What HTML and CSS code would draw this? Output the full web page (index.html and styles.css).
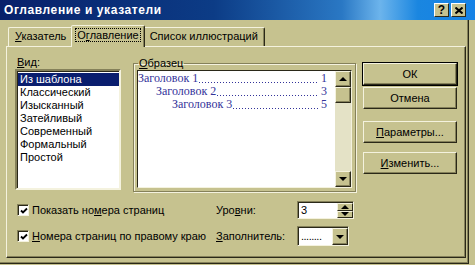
FILE: index.html
```html
<!DOCTYPE html>
<html lang="ru">
<head>
    <meta charset="UTF-8">
    <title>Оглавление и указатели</title>
    <link rel="stylesheet" href="styles.css">
</head>
<body>
    <div class="dialog">
        <div class="titlebar">
            <span class="title">Оглавление и указатели</span>
            <div class="tb-buttons">
                <span class="tb-btn help">?</span>
                <span class="tb-btn">
                    <svg width="8" height="7" viewBox="0 0 8 7"><path d="M0.5 0.5 L7.5 6.5 M7.5 0.5 L0.5 6.5" stroke="#000" stroke-width="2"/></svg>
                </span>
            </div>
        </div>
        <div class="client">
            <div class="tabs">
                <div class="tab"><u>У</u>казатель</div>
                <div class="tab active"><span class="focus">О<u>г</u>лавление</span></div>
                <div class="tab">Список иллюстраций</div>
            </div>
            <div class="panel">
                <div class="top">
                    <div class="kind">
                        <div class="label"><u>В</u>ид:</div>
                        <ul class="list">
                            <li class="sel">Из шаблона</li>
                            <li>Классический</li>
                            <li>Изысканный</li>
                            <li>Затейливый</li>
                            <li>Современный</li>
                            <li>Формальный</li>
                            <li>Простой</li>
                        </ul>
                    </div>
                    <fieldset class="sample">
                        <legend><u>О</u>бразец</legend>
                        <div class="preview">
                            <div class="toc">
                                <div class="toc-row"><span>Заголовок 1</span><span class="dots"></span><span>1</span></div>
                                <div class="toc-row lvl2"><span>Заголовок 2</span><span class="dots"></span><span>3</span></div>
                                <div class="toc-row lvl3"><span>Заголовок 3</span><span class="dots"></span><span>5</span></div>
                            </div>
                            <div class="scroll">
                                <div class="sbtn"><span class="tri up"></span></div>
                                <div class="sbtn thumb"></div>
                                <div class="track"></div>
                                <div class="sbtn"><span class="tri down"></span></div>
                            </div>
                        </div>
                    </fieldset>
                    <div class="buttons">
                        <div class="btn default">ОК</div>
                        <div class="btn">Отмена</div>
                        <div class="btn gap"><span><u>П</u>араметры...</span></div>
                        <div class="btn gap2"><span><u>И</u>зменить...</span></div>
                    </div>
                </div>
                <div class="bottom">
                    <div class="row">
                        <div class="check">
                            <span class="box"><svg width="8" height="8" viewBox="0 0 8 8"><path d="M1 3.5 L3 5.5 L7 1.5" fill="none" stroke="#000" stroke-width="1.8"/></svg></span>
                            <span>Показать но<u>м</u>ера страниц</span>
                        </div>
                        <div class="field-label">Уро<u>в</u>ни:</div>
                        <div class="spin">
                            <span class="spin-val">3</span>
                            <span class="spin-btns">
                                <span class="sb"><span class="tri up"></span></span>
                                <span class="sb"><span class="tri down"></span></span>
                            </span>
                        </div>
                    </div>
                    <div class="row row2">
                        <div class="check">
                            <span class="box"><svg width="8" height="8" viewBox="0 0 8 8"><path d="M1 3.5 L3 5.5 L7 1.5" fill="none" stroke="#000" stroke-width="1.8"/></svg></span>
                            <span><u>Н</u>омера страниц по правому краю</span>
                        </div>
                        <div class="field-label"><u>З</u>аполнитель:</div>
                        <div class="combo">
                            <span class="combo-val">........</span>
                            <span class="combo-btn"><span class="tri down"></span></span>
                        </div>
                    </div>
                </div>
            </div>
        </div>
    </div>
</body>
</html>
```

FILE: styles.css
```css
*{
    margin: 0;
    padding: 0;
    box-sizing: border-box;
    list-style: none;
}
body{
    width: 475px;
    height: 265px;
    overflow: hidden;
    background-color: #c6c28f;
    font-family: "Liberation Sans", Arial, sans-serif;
    font-size: 11px;
    color: #000;
}
u{
    text-decoration: underline;
}
.dialog{
    width: 475px;
    height: 265px;
}
/* title bar */
.titlebar{
    height: 20px;
    display: flex;
    align-items: center;
    justify-content: space-between;
    padding: 0 9px 0 4px;
    background: linear-gradient(to right, #08206a 0%, #0c3c86 45%, #2a78c4 72%, #6cb4ec 80%, #1a86e0 88%, #1582e6 100%);
}
.title{
    color: #fff;
    font-weight: bold;
    font-size: 12px;
    letter-spacing: 0.6px;
}
.tb-buttons{
    display: flex;
    gap: 2px;
}
.tb-btn{
    width: 15px;
    height: 14px;
    display: flex;
    align-items: center;
    justify-content: center;
    background-color: #c6c28f;
    border: 1px solid;
    border-color: #fff #2a2818 #2a2818 #fff;
    font-weight: bold;
    font-size: 12px;
    line-height: 1;
}
/* client area */
.client{
    width: 469px;
    height: 244px;
    border-right: 1px solid #2a2818;
    border-bottom: 1px solid #2a2818;
    box-shadow: inset -1px -1px 0 #85815a;
}
.tabs{
    display: flex;
    align-items: flex-end;
    padding: 4px 0 0 8px;
    height: 26px;
}
.tab{
    height: 19px;
    line-height: 17px;
    padding: 0 6px;
    border: 1px solid;
    border-bottom: none;
    border-color: #f4f2de #2a2818 transparent #f4f2de;
    border-radius: 2px 2px 0 0;
    box-shadow: inset -1px 0 0 #85815a;
}
.tab.active{
    height: 22px;
    line-height: 19px;
    padding: 0 4px;
    margin: 0 -2px -1px -2px;
    position: relative;
    z-index: 1;
    background-color: #c6c28f;
}
.focus{
    outline: 1px dotted #000;
    padding: 0 1px;
}
.panel{
    margin-left: 6px;
    width: 460px;
    height: 212px;
    border: 1px solid;
    border-color: #f4f2de #2a2818 #2a2818 #f4f2de;
    box-shadow: inset -1px -1px 0 #85815a;
}
.top{
    display: flex;
    padding: 9px 0 0 8px;
}
.kind{
    width: 106px;
    flex-shrink: 0;
}
.label{
    height: 13px;
    line-height: 13px;
    padding-left: 2px;
}
.list{
    height: 121px;
    background-color: #fff;
    border: 2px solid;
    border-color: #85815a #f4f2de #f4f2de #85815a;
    box-shadow: inset 1px 1px 0 #2a2818;
    padding: 2px 0 0 1px;
}
.list li{
    height: 13px;
    line-height: 13px;
    padding-left: 2px;
}
.list .sel{
    background-color: #0a1e6e;
    color: #fff;
}
/* sample group */
.sample{
    margin: 1px 0 0 12px;
    width: 223px;
    min-width: 0;
    flex-shrink: 0;
    height: 135px;
    border: 1px solid #85815a;
    box-shadow: 1px 1px 0 #f4f2de, inset 1px 1px 0 #f4f2de;
    padding: 0 3px;
}
.sample legend{
    margin-left: 1px;
    padding: 0 1px;
    line-height: 12px;
}
.preview{
    display: flex;
    margin-top: 1px;
    height: 118px;
    border: 1px solid;
    border-color: #2a2818 #f4f2de #f4f2de #2a2818;
}
.toc{
    flex: 1;
    min-width: 0;
    background-color: #fff;
    font-family: "Liberation Serif", "Times New Roman", serif;
    font-size: 12px;
    color: #33339a;
    padding: 1px 8px 0 0;
}
.toc-row{
    display: flex;
    height: 13px;
    line-height: 13px;
    white-space: nowrap;
}
.toc-row.lvl2{
    padding-left: 18px;
}
.toc-row.lvl3{
    padding-left: 34px;
}
/* dot leader */
.dots{
    flex: 1;
    margin: 0 3px 0 0;
    background-image: linear-gradient(to right, #33339a 1px, transparent 1px);
    background-size: 3px 1px;
    background-repeat: repeat-x;
    background-position: 1px 10px;
}
.scroll{
    width: 16px;
    flex-shrink: 0;
    display: flex;
    flex-direction: column;
    background-color: #e4e2c6;
}
.sbtn{
    height: 16px;
    display: flex;
    align-items: center;
    justify-content: center;
    background-color: #c6c28f;
    border: 1px solid;
    border-color: #f4f2de #2a2818 #2a2818 #f4f2de;
    box-shadow: inset -1px -1px 0 #85815a;
}
.track{
    flex: 1;
}
.tri{
    width: 0;
    height: 0;
    border-left: 4px solid transparent;
    border-right: 4px solid transparent;
}
.tri.up{
    border-bottom: 4px solid #000;
}
.tri.down{
    border-top: 4px solid #000;
}
/* buttons */
.buttons{
    margin: 7px 0 0 7px;
    width: 94px;
    flex-shrink: 0;
    display: flex;
    flex-direction: column;
}
.btn{
    height: 22px;
    display: flex;
    align-items: center;
    justify-content: center;
    border: 1px solid;
    border-color: #f4f2de #2a2818 #2a2818 #f4f2de;
    box-shadow: inset -1px -1px 0 #85815a;
    margin-bottom: 2px;
}
.btn.default{
    outline: 1px solid #000;
}
.btn.gap{
    margin-top: 10px;
}
.btn.gap2{
    margin-top: 7px;
}
/* bottom rows */
.bottom{
    padding: 9px 0 0 10px;
}
.row{
    display: flex;
    align-items: center;
    height: 18px;
}
.row2{
    margin-top: 7px;
    height: 20px;
}
.check{
    width: 199px;
    display: flex;
    align-items: center;
    gap: 3px;
}
.box{
    width: 12px;
    height: 12px;
    background-color: #fff;
    border: 1px solid;
    border-color: #85815a #f4f2de #f4f2de #85815a;
    box-shadow: inset 1px 1px 0 #2a2818;
    display: flex;
    align-items: center;
    justify-content: center;
    padding: 1px 0 0 1px;
}
.field-label{
    width: 81px;
}
.spin{
    width: 57px;
    height: 18px;
    display: flex;
    background-color: #fff;
    border: 1px solid;
    border-color: #85815a #f4f2de #f4f2de #85815a;
    box-shadow: inset 1px 1px 0 #2a2818;
}
.spin-val{
    flex: 1;
    padding: 2px 0 0 3px;
}
.spin-btns{
    width: 16px;
    display: flex;
    flex-direction: column;
    padding-top: 1px;
}
.sb{
    flex: 1;
    display: flex;
    align-items: center;
    justify-content: center;
    background-color: #c6c28f;
    border: 1px solid;
    border-color: #f4f2de #2a2818 #2a2818 #f4f2de;
}
.combo{
    width: 52px;
    height: 20px;
    display: flex;
    background-color: #fff;
    border: 1px solid;
    border-color: #85815a #f4f2de #f4f2de #85815a;
    box-shadow: inset 1px 1px 0 #2a2818;
}
.combo-val{
    flex: 1;
    padding: 3px 0 0 3px;
    letter-spacing: -0.5px;
}
.combo-btn{
    width: 16px;
    margin-top: 1px;
    display: flex;
    align-items: center;
    justify-content: center;
    background-color: #c6c28f;
    border: 1px solid;
    border-color: #f4f2de #2a2818 #2a2818 #f4f2de;
    box-shadow: inset -1px -1px 0 #85815a;
}
```
